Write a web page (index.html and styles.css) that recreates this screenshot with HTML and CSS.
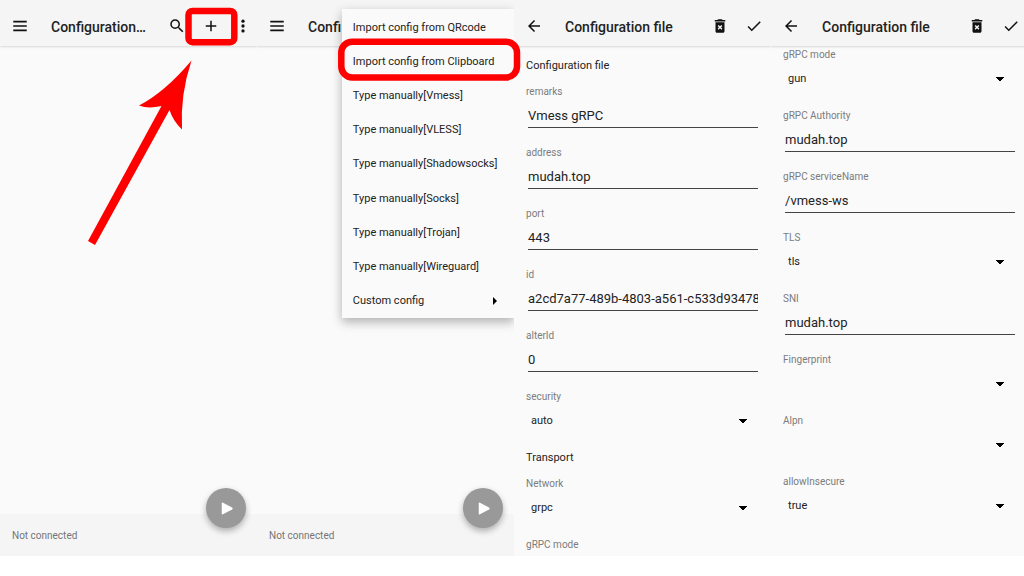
FILE: index.html
```html
<!DOCTYPE html>
<html lang="en">
<head>
<meta charset="utf-8">
<meta name="viewport" content="width=device-width, initial-scale=1">
<title>Configuration file</title>
<link rel="stylesheet" href="styles.css">
</head>
<body>
<svg class="defs" aria-hidden="true">
  <symbol id="i-menu" viewBox="0 0 24 24"><path d="M3 5h18v2.200H3zM3 10.900h18v2.200H3zM3 16.800h18V19H3z"/></symbol>
  <symbol id="i-search" viewBox="0 0 24 24"><path d="M15.5 14h-.79l-.28-.27A6.47 6.47 0 0 0 16 9.500 6.500 6.500 0 1 0 9.500 16c1.610 0 3.090-.590 4.230-1.570l.270.280v.790l5 4.990L20.490 19zm-6 0C7.010 14 5 11.990 5 9.500S7.010 5 9.500 5 14 7.010 14 9.500 11.990 14 9.500 14z"/></symbol>
  <symbol id="i-add" viewBox="0 0 24 24"><path d="M19 13h-6v6h-2v-6H5v-2h6V5h2v6h6z"/></symbol>
  <symbol id="i-more" viewBox="0 0 24 24"><circle cx="12" cy="5.500" r="2.200"/><circle cx="12" cy="12" r="2.200"/><circle cx="12" cy="18.500" r="2.200"/></symbol>
  <symbol id="i-back" viewBox="0 0 24 24"><path d="M20 11H7.830l5.590-5.590L12 4l-8 8 8 8 1.410-1.410L7.830 13H20z"/></symbol>
  <symbol id="i-delete" viewBox="0 0 24 24"><path fill-rule="evenodd" d="M6 19c0 1.100.9 2 2 2h8c1.100 0 2-.9 2-2V7H6zM8.800 11.900l1.400-1.400L12 12.300l1.800-1.800 1.400 1.400L13.400 13.700l1.800 1.800-1.400 1.400L12 15.100l-1.800 1.800-1.400-1.400L10.600 13.700zM15.500 4l-1-1h-5l-1 1H5v2h14V4z"/></symbol>
  <symbol id="i-check" viewBox="0 0 24 24"><path d="M9 16.170 4.830 12l-1.420 1.410L9 19 21 7l-1.410-1.410z"/></symbol>
  <symbol id="i-play" viewBox="0 0 24 24"><path d="M6 5.500v13q0 1.500 1.500.8l11.500-6q1.600-1.300 0-2.600l-11.500-6Q6 4 6 5.500z"/></symbol>
</svg>

<main class="board">
  <section class="screen">
    <header class="bar">
      <button class="icon nav" aria-label="Open menu"><svg><use href="#i-menu"/></svg></button>
      <h1 class="title">Configuration…</h1>
      <button class="icon" aria-label="Search"><svg><use href="#i-search"/></svg></button>
      <button class="icon" aria-label="Add"><svg><use href="#i-add"/></svg></button>
      <button class="icon more" aria-label="More"><svg><use href="#i-more"/></svg></button>
    </header>
    <div class="list"></div>
    <footer class="status">Not connected</footer>
    <button class="fab" aria-label="Connect"><svg><use href="#i-play"/></svg></button>
  </section>

  <section class="screen">
    <header class="bar">
      <button class="icon nav" aria-label="Open menu"><svg><use href="#i-menu"/></svg></button>
      <h1 class="title">Confi</h1>
    </header>
    <div class="list"></div>
    <footer class="status">Not connected</footer>
    <button class="fab" aria-label="Connect"><svg><use href="#i-play"/></svg></button>
    <div class="menu">
      <button class="item">Import config from QRcode</button>
      <button class="item">Import config from Clipboard</button>
      <button class="item">Type manually[Vmess]</button>
      <button class="item">Type manually[VLESS]</button>
      <button class="item">Type manually[Shadowsocks]</button>
      <button class="item">Type manually[Socks]</button>
      <button class="item">Type manually[Trojan]</button>
      <button class="item">Type manually[Wireguard]</button>
      <button class="item sub">Custom config</button>
    </div>
  </section>

  <section class="screen">
    <header class="bar">
      <button class="icon nav" aria-label="Back"><svg><use href="#i-back"/></svg></button>
      <h1 class="title">Configuration file</h1>
      <button class="icon" aria-label="Delete"><svg><use href="#i-delete"/></svg></button>
      <button class="icon" aria-label="Save"><svg><use href="#i-check"/></svg></button>
    </header>
    <form class="form first">
      <h2 class="heading">Configuration file</h2>
      <div class="field"><label for="remarks">remarks</label><input id="remarks" value="Vmess gRPC"></div>
      <div class="field"><label for="address">address</label><input id="address" value="mudah.top"></div>
      <div class="field"><label for="port">port</label><input id="port" value="443"></div>
      <div class="field"><label for="uid">id</label><input id="uid" value="a2cd7a77-489b-4803-a561-c533d93478"></div>
      <div class="field"><label for="alter">alterId</label><input id="alter" value="0"></div>
      <div class="field"><label for="security">security</label><select id="security"><option>auto</option></select></div>
      <h2 class="heading">Transport</h2>
      <div class="field"><label for="network">Network</label><select id="network"><option>grpc</option></select></div>
      <div class="field"><label>gRPC mode</label></div>
    </form>
  </section>

  <section class="screen">
    <header class="bar">
      <button class="icon nav" aria-label="Back"><svg><use href="#i-back"/></svg></button>
      <h1 class="title">Configuration file</h1>
      <button class="icon" aria-label="Delete"><svg><use href="#i-delete"/></svg></button>
      <button class="icon" aria-label="Save"><svg><use href="#i-check"/></svg></button>
    </header>
    <form class="form">
      <div class="field"><label for="mode">gRPC mode</label><select id="mode"><option>gun</option></select></div>
      <div class="field"><label for="authority">gRPC Authority</label><input id="authority" value="mudah.top"></div>
      <div class="field"><label for="service">gRPC serviceName</label><input id="service" value="/vmess-ws"></div>
      <div class="field"><label for="tls">TLS</label><select id="tls"><option>tls</option></select></div>
      <div class="field"><label for="sni">SNI</label><input id="sni" value="mudah.top"></div>
      <div class="field"><label for="finger">Fingerprint</label><select id="finger"><option></option></select></div>
      <div class="field"><label for="alpn">Alpn</label><select id="alpn"><option></option></select></div>
      <div class="field"><label for="insecure">allowInsecure</label><select id="insecure"><option>true</option></select></div>
    </form>
  </section>

  <svg class="marks" viewBox="0 0 1024 576" aria-hidden="true">
    <rect x="188.500" y="10.900" width="45.800" height="31.300" rx="4"/>
    <rect x="341.300" y="41.700" width="175.700" height="35.800" rx="11"/>
    <path d="M191.500 60.500Q165 92 139 105.500Q148 109 161.500 106L88 241L95 245L169.500 110Q173 121 182 129.500Q180 95 191.500 60.500z"/>
  </svg>
</main>
</body>
</html>
```
FILE: styles.css
```css
* { box-sizing: border-box; }

body {
  margin: 0;
  background: #fff;
  color: #222;
  font-family: Roboto, "Liberation Sans", sans-serif;
}

button, input, select {
  margin: 0;
  padding: 0;
  border: 0;
  border-radius: 0;
  background: none;
  color: inherit;
  font: inherit;
  outline: 0;
  appearance: none;
}

.defs { position: absolute; width: 0; height: 0; }

.board {
  position: relative;
  display: grid;
  grid-template-columns: repeat(4, 25.1%);
  grid-template-rows: minmax(0, 1fr);
  height: 100vh;
  padding-bottom: 20px;
  overflow: hidden;
}

.screen {
  position: relative;
  display: flex;
  flex-direction: column;
  overflow: hidden;
  background: #fafafa;
}

.bar {
  display: flex;
  flex: none;
  align-items: center;
  height: 46px;
  padding: 8px 0 0 6px;
  background: #f5f5f5;
  box-shadow: 0 1px 2px rgba(0, 0, 0, 0.14);
}

.icon {
  flex: none;
  display: grid;
  place-items: center;
  width: 34px;
  height: 32px;
  margin-bottom: 2px;
  color: #111;
}

.icon svg { width: 18px; height: 18px; fill: currentColor; }
.icon.nav { width: 28px; }
.icon.more { width: 29px; }

.title {
  flex: 1;
  min-width: 0;
  margin: 0 8px 0 17px;
  overflow: hidden;
  font-size: 14px;
  font-weight: 500;
  line-height: 20px;
  text-overflow: ellipsis;
  white-space: nowrap;
}

.list { flex: 1; }

.status {
  flex: none;
  height: 42px;
  padding: 1px 0 0 12px;
  background: #f5f5f5;
  color: #757575;
  font-size: 10px;
  line-height: 42px;
}

.fab {
  position: absolute;
  right: 11px;
  bottom: 28px;
  display: grid;
  place-items: center;
  width: 40px;
  height: 40px;
  border-radius: 50%;
  background: #999;
  box-shadow: 0 3px 6px rgba(0, 0, 0, 0.3);
}

.fab svg { width: 19px; height: 19px; fill: #fff; }

.menu {
  position: absolute;
  top: 9px;
  right: 0;
  left: 33%;
  display: grid;
  grid-auto-rows: 1fr;
  height: 309px;
  padding-top: 1px;
  background: #fafafa;
  box-shadow: 0 4px 10px rgba(0, 0, 0, 0.3);
}

.item {
  display: flex;
  align-items: center;
  justify-content: space-between;
  padding: 0 17px 0 11px;
  font-size: 11px;
  white-space: nowrap;
}

.item.sub::after {
  content: "";
  border: solid transparent;
  border-width: 4px 0 4px 4px;
  border-left-color: #000;
}

.form { flex: 1; min-height: 0; padding: 0 12px; }
.form.first { padding-top: 11px; }

.heading {
  margin: 0 0 8px;
  font-size: 11px;
  font-weight: 400;
  line-height: 18px;
}

.field { display: grid; padding-bottom: 16px; }

.field label {
  color: #7c7c7c;
  font-size: 10px;
  line-height: 18px;
}

.field input,
.field select {
  min-width: 0;
  height: 27px;
  margin: 0 1px 0 2px;
  padding-top: 3px;
}

.field input {
  border-bottom: 1px solid #444;
  font-size: 13px;
}

.field select {
  padding-left: 3px;
  padding-bottom: 1px;
  background: linear-gradient(to bottom right, #000 50%, transparent 51%) right 11px top 13px / 4px 4px no-repeat,
    linear-gradient(to bottom left, #000 50%, transparent 51%) right 15px top 13px / 4px 4px no-repeat;
  font-size: 11px;
}

.marks {
  position: absolute;
  top: 0;
  left: 0;
  width: 100%;
  pointer-events: none;
}

.marks rect { fill: none; stroke: #f00; stroke-width: 6.500px; }
.marks path { fill: #f00; }
```
